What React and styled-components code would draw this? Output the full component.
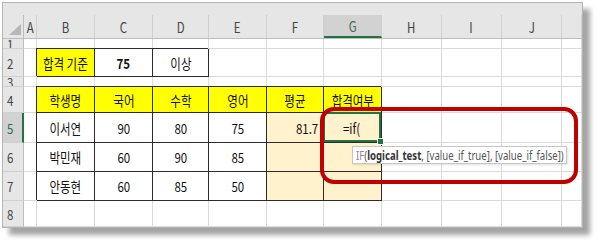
import React from "react";
import styled, { createGlobalStyle, css } from "styled-components";

const GlobalStyle = createGlobalStyle`
    html, body {
        margin: 0;
        padding: 0;
        background: #ffffff;
    }
    body {
        font-family: "Noto Sans CJK KR", "Noto Sans", sans-serif;
    }
`

const COLUMNS = [
    { key: 'A', width: 13 },
    { key: 'B', width: 58 },
    { key: 'C', width: 58 },
    { key: 'D', width: 56 },
    { key: 'E', width: 58 },
    { key: 'F', width: 57 },
    { key: 'G', width: 58 },
    { key: 'H', width: 60 },
    { key: 'I', width: 60 },
    { key: 'J', width: 60 },
    { key: '', width: 20 },
]

const TEMPLATE = `21px ${COLUMNS.map(c => `${c.width}px`).join(' ')}`

const YELLOW = '#ffff00'
const PEACH = '#fff2cc'
const GREEN = '#217346'

const yellow = (text) => ({ text, bg: YELLOW, box: true })
const num = (text) => ({ text, box: true })
const peach = (text, extra = {}) => ({ text, bg: PEACH, box: true, ...extra })

const ROWS = [
    { n: 1, h: 10, cells: {} },
    { n: 2, h: 28, cells: { B: yellow('합격 기준'), C: { text: '75', box: true, bold: true }, D: num('이상') } },
    { n: 3, h: 10, cells: {} },
    { n: 4, h: 26, cells: { B: yellow('학생명'), C: yellow('국어'), D: yellow('수학'), E: yellow('영어'), F: yellow('평균'), G: yellow('합격여부') } },
    { n: 5, h: 30, active: true, cells: { B: num('이서연'), C: num('90'), D: num('80'), E: num('75'), F: peach('81.7', { align: 'right' }), G: peach('=if(', { active: true, align: 'left' }) } },
    { n: 6, h: 29, cells: { B: num('박민재'), C: num('60'), D: num('90'), E: num('85'), F: peach(''), G: peach('') } },
    { n: 7, h: 29, cells: { B: num('안동현'), C: num('60'), D: num('85'), E: num('50'), F: peach(''), G: peach('') } },
    { n: 8, h: 26, cells: {} },
]

const Page = styled.div`
    width: 600px;
    height: 242px;
    padding: 2px 0 0 2px;
    box-sizing: border-box;
`

const Frame = styled.div`
    position: relative;
    width: 579px;
    border: 1px solid #b4b4b4;
    background: #ffffff;
    box-shadow: 7px 7px 5px rgba(0, 0, 0, 0.36);
`

const HeaderRow = styled.div`
    display: grid;
    grid-template-columns: ${TEMPLATE};
    padding-top: 12px;
    background: #e6e6e6;
    border-bottom: 1px solid #bdbdbd;
`

const Corner = styled.div`
    display: flex;
    align-items: flex-end;
    justify-content: flex-end;
    height: 23px;
    padding: 0 2px 3px 0;
    box-sizing: border-box;
    border-right: 1px solid #bdbdbd;
`

const ColHead = styled.div`
    display: flex;
    align-items: center;
    justify-content: center;
    height: 23px;
    box-sizing: border-box;
    border-right: 1px solid #d0d0d0;
    font-size: 14px;
    color: #444;

    ${({ $selected }) => $selected && css`
        background: #d2d2d2;
        color: #3d6b52;
        border-bottom: 2px solid ${GREEN};
    `}
`

const Row = styled.div`
    display: grid;
    grid-template-columns: ${TEMPLATE};
    height: ${({ $h }) => $h}px;
`

const RowHead = styled.div`
    display: flex;
    align-items: center;
    padding-left: 4px;
    box-sizing: border-box;
    overflow: hidden;
    background: #e6e6e6;
    border-right: 1px solid #bdbdbd;
    border-bottom: 1px solid #d0d0d0;
    font-size: 14px;
    color: #444;

    ${({ $selected }) => $selected && css`
        background: #d2d2d2;
        color: ${GREEN};
        border-right: 2px solid ${GREEN};
    `}
`

const justify = { left: 'flex-start', right: 'flex-end', center: 'center' }
const pad = { left: '0 0 0 19px', right: '0 5px 0 0', center: '0' }

const Cell = styled.div`
    display: flex;
    align-items: center;
    justify-content: ${({ $align = 'center' }) => justify[$align]};
    padding: ${({ $align = 'center' }) => pad[$align]};
    box-sizing: border-box;
    overflow: hidden;
    background: ${({ $bg }) => $bg || '#ffffff'};
    border-right: 1px solid #dadada;
    border-bottom: 1px solid #dadada;
    font-size: 14px;
    font-weight: ${({ $bold }) => $bold ? 700 : 400};
    color: #111;

    ${({ $box }) => $box && css`
        border-right-color: #2b2b2b;
        border-bottom-color: #2b2b2b;
        box-shadow: -1px -1px 0 #2b2b2b;
    `}

    ${({ $active }) => $active && css`
        position: relative;
        z-index: 1;
        overflow: visible;

        &::after {
            content: '';
            position: absolute;
            top: -1px;
            left: -1px;
            right: 0;
            bottom: 0;
            border: 2px solid ${GREEN};
        }

        &::before {
            content: '';
            position: absolute;
            right: -3px;
            bottom: -3px;
            width: 5px;
            height: 5px;
            background: ${GREEN};
            border: 1px solid #ffffff;
            z-index: 2;
        }
    `}
`

const origins = { left: 'left center', right: 'right center', center: 'center' }

const Txt = styled.span`
    display: inline-block;
    white-space: nowrap;
    transform: scaleX(0.82);
    transform-origin: ${({ $align = 'center' }) => origins[$align]};
`

const Triangle = () => (
    <svg width="12" height="11" viewBox="0 0 12 11">
        <polygon points="12,0 12,11 0,11" fill="#b7b7b7" />
    </svg>
)

const Tooltip = styled.div`
    position: absolute;
    left: 349px;
    top: 143px;
    width: 215px;
    height: 18px;
    display: flex;
    align-items: center;
    padding-left: 3px;
    box-sizing: border-box;
    background: #ffffff;
    border: 1px solid #c6c6c6;
    box-shadow: 1px 1px 2px rgba(0, 0, 0, 0.12);
    font-family: "Noto Sans", sans-serif;
    font-size: 12px;
    color: #555;
    z-index: 3;
`

const TipLine = styled.span`
    display: inline-block;
    white-space: nowrap;
    transform: scaleX(0.8);
    transform-origin: left center;
`

const FuncName = styled.span`
    color: #9c8297;
`

const Arg = styled.span`
    font-weight: 700;
    color: #333;
`

const Callout = styled.div`
    position: absolute;
    left: 317px;
    top: 104px;
    width: 258px;
    height: 77px;
    box-sizing: border-box;
    border: 4px solid #c00000;
    border-radius: 14px;
    z-index: 4;
    pointer-events: none;
`

const App = () => (
    <Page>
        <GlobalStyle />
        <Frame>
            <HeaderRow>
                <Corner><Triangle /></Corner>
                {COLUMNS.map(c => (
                    <ColHead key={c.key || 'end'} $selected={c.key === 'G'}>
                        <Txt>{c.key}</Txt>
                    </ColHead>
                ))}
            </HeaderRow>

            {ROWS.map(row => (
                <Row key={row.n} $h={row.h}>
                    <RowHead $selected={row.active}>
                        <Txt $align="left">{row.n}</Txt>
                    </RowHead>
                    {COLUMNS.map(c => {
                        const cell = row.cells[c.key] || {}
                        return (
                            <Cell
                                key={c.key || 'end'}
                                $bg={cell.bg}
                                $box={cell.box}
                                $bold={cell.bold}
                                $align={cell.align}
                                $active={cell.active}
                            >
                                {cell.text && <Txt $align={cell.align}>{cell.text}</Txt>}
                            </Cell>
                        )
                    })}
                </Row>
            ))}

            <Tooltip>
                <TipLine>
                    <FuncName>IF</FuncName>(<Arg>logical_test</Arg>, [value_if_true], [value_if_false])
                </TipLine>
            </Tooltip>

            <Callout />
        </Frame>
    </Page>
)

export default App;
